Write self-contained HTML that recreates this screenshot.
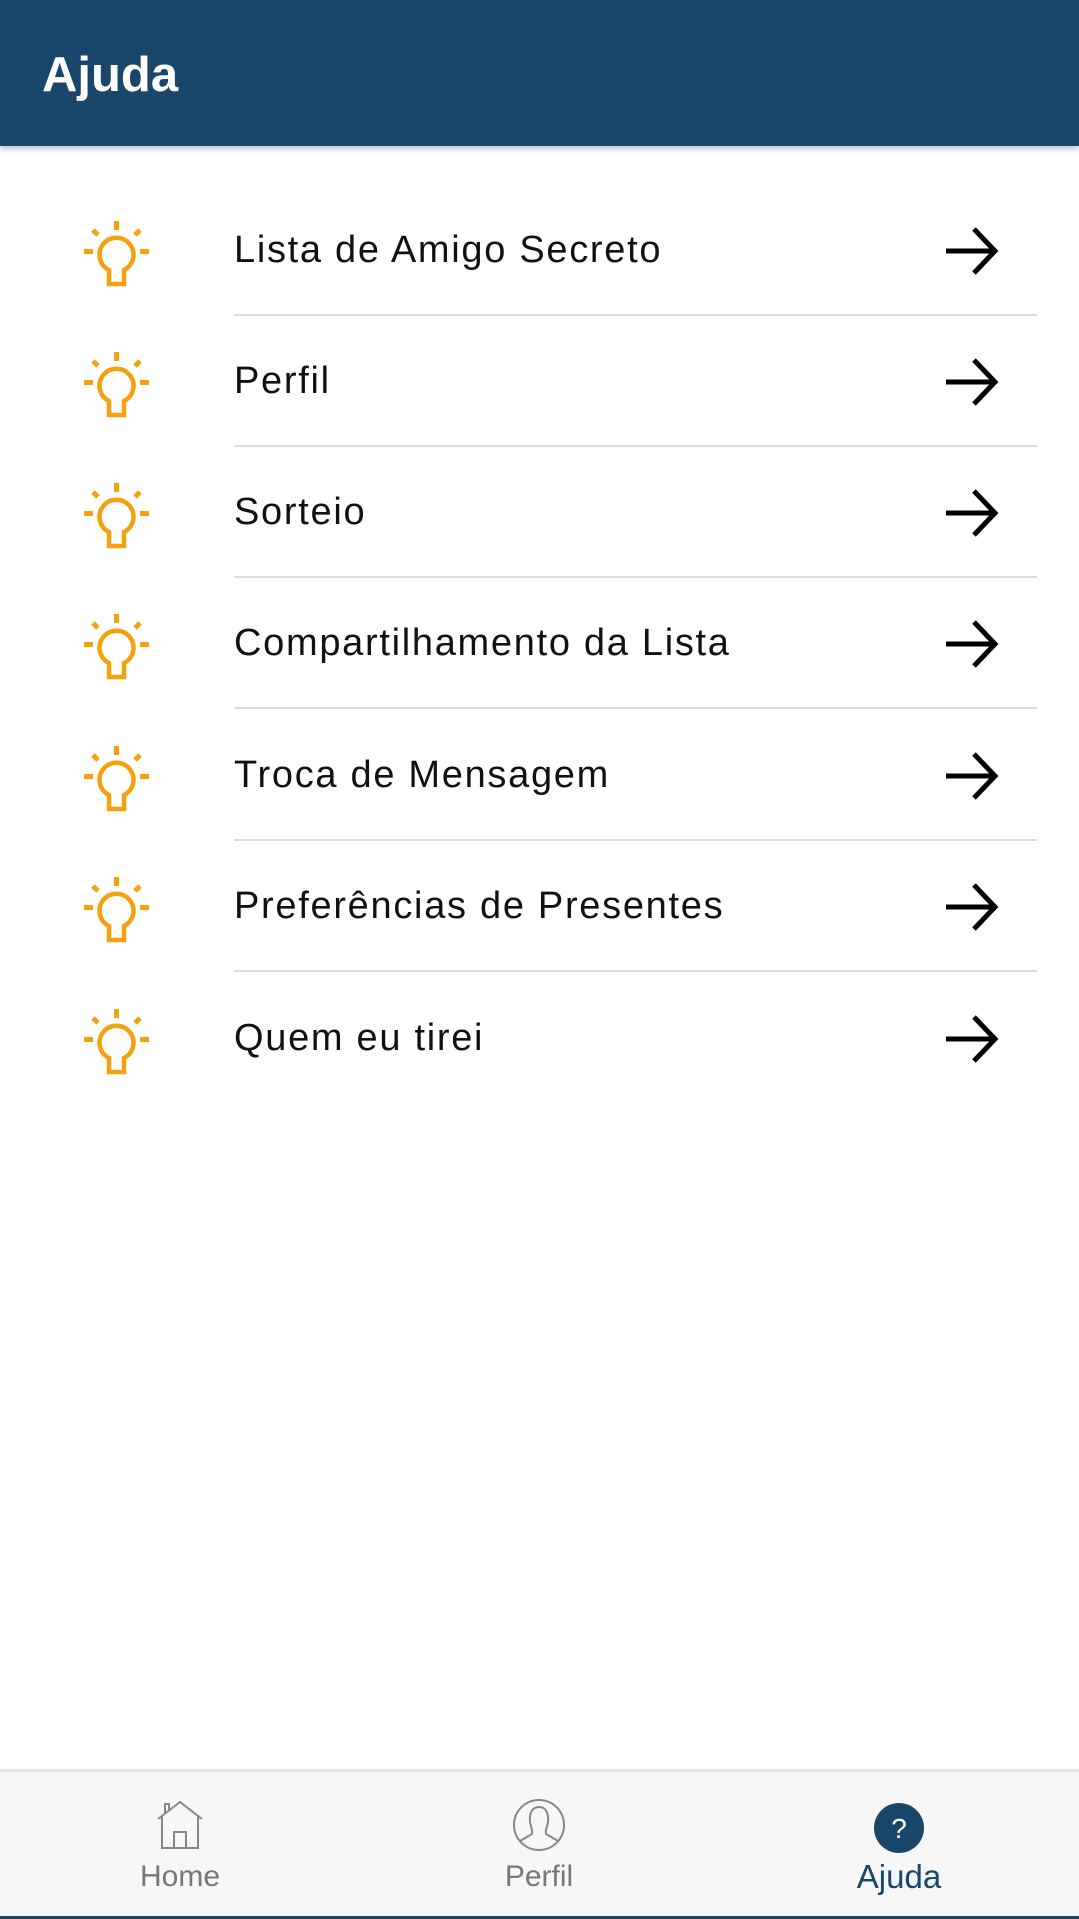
<!DOCTYPE html>
<html><head><meta charset="utf-8"><style>
*{margin:0;padding:0;box-sizing:border-box}
body{width:1079px;height:1919px;background:#fff;font-family:"Liberation Sans",sans-serif;position:relative;overflow:hidden}
.hdr{position:absolute;left:0;top:0;width:1079px;height:146px;background:#18476b;box-shadow:0 3px 6px rgba(0,0,0,0.25)}
.hdr span{position:absolute;left:42px;top:45px;font-size:49px;font-weight:bold;color:#fff;line-height:60px}
.row{position:absolute;left:0;width:1079px;height:131px}
.row .t{position:absolute;left:234px;top:0;height:131px;line-height:131px;font-size:38px;letter-spacing:1.7px;color:#111}
.row .line{position:absolute;left:234px;right:42px;bottom:0;height:2px;background:#dcdcdc}
.row svg.b{position:absolute;left:80px;top:33px}
.row svg.a{position:absolute;left:942px;top:40px}
.nav{position:absolute;left:0;top:1769px;width:1079px;height:150px;background:#f7f7f7;border-top:3px solid #e6e6e6}
.nav .bl{position:absolute;left:0;bottom:0;width:100%;height:3px;background:#18476b}
.lab{position:absolute;top:88px;width:200px;text-align:center;font-size:30px;color:#777}
</style></head><body>
<div class="hdr"><span>Ajuda</span></div>

<div class="row" style="top:185px"><svg class="b" width="74" height="70" viewBox="0 0 74 70"><g fill="#f5a10f"><rect x="4" y="31" width="9" height="5"/><rect x="60" y="31" width="9" height="5"/><rect x="34" y="3" width="5" height="9"/><rect x="12" y="12" width="7" height="5" transform="rotate(45 15.5 14.5)"/><rect x="54" y="12" width="7" height="5" transform="rotate(-45 57.5 14.5)"/></g><path d="M29 66 V52 A17 17 0 1 1 44 52 V66 Z" fill="none" stroke="#f5a10f" stroke-width="4.5"/></svg><div class="t">Lista de Amigo Secreto</div><svg class="a" width="60" height="52" viewBox="0 0 60 52"><path d="M4 26 H52 M32 4 L53 26 L32 48" fill="none" stroke="#000" stroke-width="5"/></svg><div class="line"></div></div>

<div class="row" style="top:316px"><svg class="b" width="74" height="70" viewBox="0 0 74 70"><g fill="#f5a10f"><rect x="4" y="31" width="9" height="5"/><rect x="60" y="31" width="9" height="5"/><rect x="34" y="3" width="5" height="9"/><rect x="12" y="12" width="7" height="5" transform="rotate(45 15.5 14.5)"/><rect x="54" y="12" width="7" height="5" transform="rotate(-45 57.5 14.5)"/></g><path d="M29 66 V52 A17 17 0 1 1 44 52 V66 Z" fill="none" stroke="#f5a10f" stroke-width="4.5"/></svg><div class="t">Perfil</div><svg class="a" width="60" height="52" viewBox="0 0 60 52"><path d="M4 26 H52 M32 4 L53 26 L32 48" fill="none" stroke="#000" stroke-width="5"/></svg><div class="line"></div></div>

<div class="row" style="top:447px"><svg class="b" width="74" height="70" viewBox="0 0 74 70"><g fill="#f5a10f"><rect x="4" y="31" width="9" height="5"/><rect x="60" y="31" width="9" height="5"/><rect x="34" y="3" width="5" height="9"/><rect x="12" y="12" width="7" height="5" transform="rotate(45 15.5 14.5)"/><rect x="54" y="12" width="7" height="5" transform="rotate(-45 57.5 14.5)"/></g><path d="M29 66 V52 A17 17 0 1 1 44 52 V66 Z" fill="none" stroke="#f5a10f" stroke-width="4.5"/></svg><div class="t">Sorteio</div><svg class="a" width="60" height="52" viewBox="0 0 60 52"><path d="M4 26 H52 M32 4 L53 26 L32 48" fill="none" stroke="#000" stroke-width="5"/></svg><div class="line"></div></div>

<div class="row" style="top:578px"><svg class="b" width="74" height="70" viewBox="0 0 74 70"><g fill="#f5a10f"><rect x="4" y="31" width="9" height="5"/><rect x="60" y="31" width="9" height="5"/><rect x="34" y="3" width="5" height="9"/><rect x="12" y="12" width="7" height="5" transform="rotate(45 15.5 14.5)"/><rect x="54" y="12" width="7" height="5" transform="rotate(-45 57.5 14.5)"/></g><path d="M29 66 V52 A17 17 0 1 1 44 52 V66 Z" fill="none" stroke="#f5a10f" stroke-width="4.5"/></svg><div class="t">Compartilhamento da Lista</div><svg class="a" width="60" height="52" viewBox="0 0 60 52"><path d="M4 26 H52 M32 4 L53 26 L32 48" fill="none" stroke="#000" stroke-width="5"/></svg><div class="line"></div></div>

<div class="row" style="top:710px"><svg class="b" width="74" height="70" viewBox="0 0 74 70"><g fill="#f5a10f"><rect x="4" y="31" width="9" height="5"/><rect x="60" y="31" width="9" height="5"/><rect x="34" y="3" width="5" height="9"/><rect x="12" y="12" width="7" height="5" transform="rotate(45 15.5 14.5)"/><rect x="54" y="12" width="7" height="5" transform="rotate(-45 57.5 14.5)"/></g><path d="M29 66 V52 A17 17 0 1 1 44 52 V66 Z" fill="none" stroke="#f5a10f" stroke-width="4.5"/></svg><div class="t">Troca de Mensagem</div><svg class="a" width="60" height="52" viewBox="0 0 60 52"><path d="M4 26 H52 M32 4 L53 26 L32 48" fill="none" stroke="#000" stroke-width="5"/></svg><div class="line"></div></div>

<div class="row" style="top:841px"><svg class="b" width="74" height="70" viewBox="0 0 74 70"><g fill="#f5a10f"><rect x="4" y="31" width="9" height="5"/><rect x="60" y="31" width="9" height="5"/><rect x="34" y="3" width="5" height="9"/><rect x="12" y="12" width="7" height="5" transform="rotate(45 15.5 14.5)"/><rect x="54" y="12" width="7" height="5" transform="rotate(-45 57.5 14.5)"/></g><path d="M29 66 V52 A17 17 0 1 1 44 52 V66 Z" fill="none" stroke="#f5a10f" stroke-width="4.5"/></svg><div class="t">Preferências de Presentes</div><svg class="a" width="60" height="52" viewBox="0 0 60 52"><path d="M4 26 H52 M32 4 L53 26 L32 48" fill="none" stroke="#000" stroke-width="5"/></svg><div class="line"></div></div>

<div class="row" style="top:973px"><svg class="b" width="74" height="70" viewBox="0 0 74 70"><g fill="#f5a10f"><rect x="4" y="31" width="9" height="5"/><rect x="60" y="31" width="9" height="5"/><rect x="34" y="3" width="5" height="9"/><rect x="12" y="12" width="7" height="5" transform="rotate(45 15.5 14.5)"/><rect x="54" y="12" width="7" height="5" transform="rotate(-45 57.5 14.5)"/></g><path d="M29 66 V52 A17 17 0 1 1 44 52 V66 Z" fill="none" stroke="#f5a10f" stroke-width="4.5"/></svg><div class="t">Quem eu tirei</div><svg class="a" width="60" height="52" viewBox="0 0 60 52"><path d="M4 26 H52 M32 4 L53 26 L32 48" fill="none" stroke="#000" stroke-width="5"/></svg></div>

<div class="nav">
<svg style="position:absolute;left:155px;top:27px" width="50" height="52" viewBox="0 0 50 52"><path d="M3 20 L25 3 L47 20 M7 17 V49 H43 V17 M19 49 V33 H31 V49 M10 14 V5 H14 V11" fill="none" stroke="#888" stroke-width="2"/></svg>
<div class="lab" style="left:80px">Home</div>
<svg style="position:absolute;left:512px;top:26px" width="54" height="54" viewBox="0 0 54 54"><circle cx="27" cy="27" r="25" fill="none" stroke="#888" stroke-width="2"/><path d="M8 43 L20 36 C21 32 19 30 18 24 C17 14 21 9 27 9 C33 9 37 14 36 24 C35 30 33 32 34 36 L46 43" fill="none" stroke="#888" stroke-width="2"/></svg>
<div class="lab" style="left:439px">Perfil</div>
<svg style="position:absolute;left:873px;top:30px" width="52" height="52" viewBox="0 0 52 52"><circle cx="26" cy="26" r="25" fill="#18476b"/><text x="26" y="36" text-anchor="middle" font-family="Liberation Sans" font-size="28" fill="#fff">?</text></svg>
<div class="lab" style="left:799px;color:#18476b;font-size:33px;top:86px">Ajuda</div>
<div class="bl"></div>
</div>
</body></html>
